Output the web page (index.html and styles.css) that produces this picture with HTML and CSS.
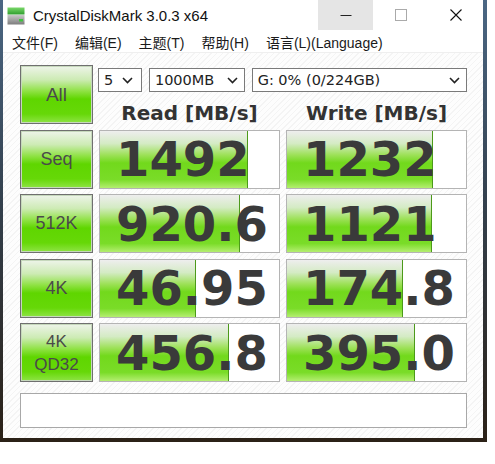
FILE: index.html
```html
<!DOCTYPE html>
<html lang="zh-CN">
<head>
  <meta charset="UTF-8" />
  <title>CrystalDiskMark 3.0.3 x64</title>
  <link rel="stylesheet" href="styles.css">
</head>
<body>
  <div class="desktop">
    <div class="window">
      <div class="titlebar">
        <svg class="app-icon" width="18" height="18" viewBox="0 0 18 18">
          <defs>
            <linearGradient id="gTop" x1="0" y1="0" x2="0" y2="1">
              <stop offset="0" stop-color="#7ad86a"/>
              <stop offset="1" stop-color="#2f9e2f"/>
            </linearGradient>
            <linearGradient id="gBody" x1="0" y1="0" x2="0" y2="1">
              <stop offset="0" stop-color="#c8c8c8"/>
              <stop offset="1" stop-color="#7d7d7d"/>
            </linearGradient>
          </defs>
          <rect x="0.5" y="0.5" width="17" height="7" fill="url(#gTop)"/>
          <rect x="0.5" y="8" width="17" height="9.5" fill="url(#gBody)"/>
          <rect x="12" y="12" width="4" height="2.5" fill="#3fc43f"/>
        </svg>
        <span class="title">CrystalDiskMark 3.0.3 x64</span>
        <div class="controls">
          <div class="ctl ctl-hover">
            <svg width="12" height="12" viewBox="0 0 12 12"><line x1="0.5" y1="6.5" x2="11.5" y2="6.5" stroke="#222" stroke-width="1"/></svg>
          </div>
          <div class="ctl">
            <svg width="12" height="12" viewBox="0 0 12 12"><rect x="0.5" y="0.5" width="11" height="11" fill="none" stroke="#aaa" stroke-width="1"/></svg>
          </div>
          <div class="ctl">
            <svg width="12" height="12" viewBox="0 0 12 12"><path d="M0.5 0.5 L11.5 11.5 M11.5 0.5 L0.5 11.5" stroke="#111" stroke-width="1.1"/></svg>
          </div>
        </div>
      </div>

      <div class="menubar">
        <span>文件(F)</span>
        <span>编辑(E)</span>
        <span>主题(T)</span>
        <span>帮助(H)</span>
        <span>语言(L)(Language)</span>
      </div>

      <div class="client">
        <div class="grid">
          <div class="btn btn-all">All</div>
          <div class="top">
            <div class="selects">
              <div class="sel sel-count"><span>5</span><svg width="11" height="7" viewBox="0 0 11 7"><polyline points="1,1 5.5,5.5 10,1" fill="none" stroke="#222" stroke-width="1.6"/></svg></div>
              <div class="sel sel-size"><span>1000MB</span><svg width="11" height="7" viewBox="0 0 11 7"><polyline points="1,1 5.5,5.5 10,1" fill="none" stroke="#222" stroke-width="1.6"/></svg></div>
              <div class="sel sel-drive"><span>G: 0% (0/224GB)</span><svg width="11" height="7" viewBox="0 0 11 7"><polyline points="1,1 5.5,5.5 10,1" fill="none" stroke="#222" stroke-width="1.6"/></svg></div>
            </div>
            <div class="heads">
              <div>Read [MB/s]</div>
              <div>Write [MB/s]</div>
            </div>
          </div>

          <div class="btn">Seq</div>
          <div class="cell" style="background-size: 148px 100%">1492</div>
          <div class="cell" style="background-size: 146px 100%">1232</div>

          <div class="btn">512K</div>
          <div class="cell" style="background-size: 140px 100%">920.6</div>
          <div class="cell" style="background-size: 145px 100%">1121</div>

          <div class="btn">4K</div>
          <div class="cell" style="background-size: 96px 100%">46.95</div>
          <div class="cell" style="background-size: 116px 100%">174.8</div>

          <div class="btn btn-qd">4K<br>QD32</div>
          <div class="cell" style="background-size: 129px 100%">456.8</div>
          <div class="cell" style="background-size: 128px 100%">395.0</div>
        </div>
        <div class="comment"></div>
      </div>
    </div>
  </div>
</body>
</html>
```

FILE: styles.css
```css
* {
  box-sizing: border-box;
  margin: 0;
  padding: 0;
}

body {
  background: #fff;
  font-family: "Liberation Sans", "Noto Sans CJK SC", sans-serif;
}

/* desktop peeking round the window */
.desktop {
  width: 487px;
  height: 442px;
  background: linear-gradient(#4b6784 0%, #34414e 45%, #2b2117 100%);
}

.window {
  margin-left: 3px;
  width: 480px;
  height: 438px;
  background: #fff;
  display: flex;
  flex-direction: column;
}

/* Title bar */
.titlebar {
  height: 31px;
  display: flex;
  align-items: center;
  padding-left: 4px;
}

.app-icon {
  margin-right: 8px;
  margin-top: 1px;
}

.title {
  font-size: 15px;
  color: #111;
}

.controls {
  margin-left: auto;
  display: flex;
  align-self: flex-start;
}

.ctl {
  width: 55px;
  height: 30px;
  display: flex;
  align-items: center;
  justify-content: center;
}

.ctl-hover {
  background: #e5e5e5;
}

/* Menu */
.menubar {
  height: 22px;
  display: flex;
  align-items: center;
  gap: 17px;
  padding-left: 9px;
  font-size: 14px;
  color: #1a1a1a;
  border-bottom: 1px solid #efefef;
}

/* Client area */
.client {
  flex: 1;
  padding: 12px 16px 10px 17px;
  background: repeating-linear-gradient(135deg, #fdfdfd 0 3px, #f4f4f4 3px 4px);
}

.grid {
  display: grid;
  grid-template-columns: 73px 181px 181px;
  grid-template-rows: repeat(5, 59px);
  column-gap: 6px;
  row-gap: 5.5px;
}

.btn {
  border: 1px solid #6f6f6f;
  box-shadow: inset 0 0 0 1px #c6d8bc;
  background: linear-gradient(#eef4ea 0%, #cdebb4 24%, #8fe244 44%, #5fd600 58%, #66d808 84%, #8fe445 100%);
  display: flex;
  align-items: center;
  justify-content: center;
  text-align: center;
  font-size: 18px;
  color: #4a4a4a;
}

.btn-all {
  font-size: 19px;
}

.btn-qd {
  font-size: 17px;
  line-height: 23px;
}

.top {
  grid-column: 2 / 4;
  display: flex;
  flex-direction: column;
}

.selects {
  display: flex;
  gap: 7px;
  margin-top: 3px;
  margin-left: -1px;
}

.sel {
  height: 24px;
  border: 1px solid #7a7a7a;
  background: #fff;
  display: flex;
  align-items: center;
  justify-content: space-between;
  padding: 0 6px 0 5px;
  font-family: "DejaVu Sans", sans-serif;
  font-size: 14.5px;
  color: #222;
}

.sel-count {
  width: 44px;
  padding-right: 8px;
}

.sel-size {
  width: 96px;
}

.sel-drive {
  width: 216px;
}

.heads {
  display: grid;
  grid-template-columns: 181px 181px;
  column-gap: 6px;
  margin-top: 9px;
  font: bold 20px/24px "DejaVu Sans", sans-serif;
  color: #333;
  text-align: center;
}

.cell {
  border: 1px solid #b4b4b4;
  background-color: #fff;
  background-image:
    linear-gradient(to left, #4c9a1a 0 1px, transparent 1px),
    linear-gradient(#eeeeee 0%, #d4ebc4 22%, #9de158 42%, #72d91c 56%, #7adc28 85%, #b4ee70 100%);
  background-repeat: no-repeat;
  display: flex;
  align-items: center;
  padding-left: 16px;
  font: bold 48px/1 "DejaVu Sans", sans-serif;
  color: #3a3a3a;
}

.comment {
  margin-top: 11px;
  height: 35px;
  border: 1px solid #a8a8a8;
  background: #fff;
}
```
